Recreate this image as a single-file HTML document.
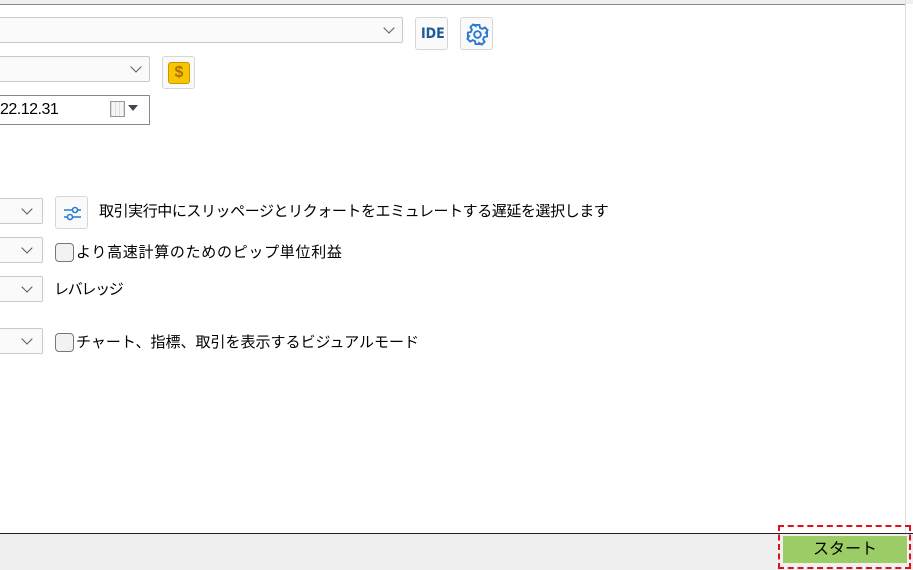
<!DOCTYPE html>
<html><head><meta charset="utf-8"><style>
*{box-sizing:border-box;margin:0;padding:0}
body{width:913px;height:570px;background:#fff;position:relative;overflow:hidden;font-family:"Liberation Sans","Noto Sans CJK JP",sans-serif;font-size:15px;color:#000}
.a{position:absolute}
.sel{position:absolute;border:1px solid #c9c9c9;background:#fafafa;border-radius:2px}
.chev{position:absolute;width:8px;height:8px;border-right:1px solid #555;border-bottom:1px solid #555;transform:rotate(45deg)}
.btn{position:absolute;border:1px solid #d6d6d6;border-radius:3px;background:#fafafa}
.cb{position:absolute;width:19px;height:19px;border:1px solid #777;border-radius:4px;background:#f2f2f2}
.t{position:absolute;white-space:nowrap;font-size:15px;line-height:20px}
</style></head><body>
<div class="a" style="left:0;top:0;width:913px;height:4px;background:#f0f0f0"></div>
<div class="a" style="left:0;top:4px;width:905px;height:1px;background:#888"></div>
<div class="a" style="left:905px;top:0;width:1px;height:533px;background:#e0e0e0"></div>

<div class="sel" style="left:-2px;top:17px;width:405px;height:26px"><div class="chev" style="left:386px;top:6px"></div></div>
<div class="btn" style="left:415px;top:17px;width:33px;height:33px"><div class="t" style="left:5px;top:6px;font-size:14px;font-weight:bold;color:#1e5a96;font-family:'DejaVu Sans Condensed','DejaVu Sans',sans-serif">IDE</div></div>
<div class="btn" style="left:460px;top:17px;width:33px;height:33px">
<svg class="a" style="left:5px;top:5px" width="23" height="23" viewBox="0 0 24 24" fill="none" stroke="#2a7bd0" stroke-width="2"><circle cx="12" cy="12" r="3.5"/><path d="M10 2h4l.6 3 2.4 1.2 2.7-1.6 2.8 2.8-1.6 2.7L22 10v4l-3 .6-1.2 2.4 1.6 2.7-2.8 2.8-2.7-1.6L14 22h-4l-.6-3-2.4-1.2-2.7 1.6-2.8-2.8 1.6-2.7L2 14v-4l3-.6 1.2-2.4-1.6-2.7 2.8-2.8 2.7 1.6z"/></svg></div>

<div class="sel" style="left:-2px;top:56px;width:152px;height:26px"><div class="chev" style="left:133px;top:6px"></div></div>
<div class="btn" style="left:162px;top:56px;width:33px;height:33px"><div class="a" style="left:5px;top:5px;width:22px;height:22px;background:#f7c600;border:1px solid #c99700;border-radius:3px;color:#b07000;font-weight:bold;font-size:16px;text-align:center;line-height:20px">$</div></div>

<div class="a" style="left:-2px;top:95px;width:152px;height:30px;border:1px solid #888;background:#fff"></div>
<div class="t" style="left:0;top:100px;font-size:16px;letter-spacing:-0.5px">22.12.31</div>
<div class="a" style="left:110px;top:101px;width:15px;height:16px;border:1px solid #999;background:repeating-linear-gradient(90deg,#ddd 0 1px,#f6f6f6 1px 4px)"></div>
<div class="a" style="left:128px;top:105px;border-left:5px solid transparent;border-right:5px solid transparent;border-top:6px solid #445"></div>

<div class="sel" style="left:-2px;top:198px;width:45px;height:26px"><div class="chev" style="left:24px;top:6px"></div></div>
<div class="btn" style="left:55px;top:196px;width:33px;height:33px">
<svg class="a" style="left:6px;top:6px" width="21" height="21" viewBox="0 0 21 21" fill="none" stroke="#2a7bd0" stroke-width="1.6"><path d="M2 7h17M2 14h17"/><circle cx="13" cy="7" r="2.5" fill="#fff"/><circle cx="8" cy="14" r="2.5" fill="#fff"/></svg></div>
<div class="t" style="left:99px;top:202px;letter-spacing:-0.43px">取引実行中にスリッページとリクォートをエミュレートする遅延を選択します</div>

<div class="sel" style="left:-2px;top:237px;width:45px;height:26px"><div class="chev" style="left:24px;top:6px"></div></div>
<div class="cb" style="left:55px;top:243px"></div>
<div class="t" style="left:76px;top:243px;letter-spacing:0.7px">より高速計算のためのピップ単位利益</div>

<div class="sel" style="left:-2px;top:276px;width:45px;height:26px"><div class="chev" style="left:24px;top:6px"></div></div>
<div class="t" style="left:54px;top:280px;letter-spacing:-1.3px">レバレッジ</div>

<div class="sel" style="left:-2px;top:328px;width:45px;height:26px"><div class="chev" style="left:24px;top:6px"></div></div>
<div class="cb" style="left:55px;top:333px"></div>
<div class="t" style="left:76px;top:333px">チャート、指標、取引を表示するビジュアルモード</div>

<div class="a" style="left:0;top:533px;width:913px;height:1px;background:#222"></div>
<div class="a" style="left:0;top:534px;width:913px;height:36px;background:#f0f0f0"></div>
<div class="a" style="left:778px;top:525px;width:133px;height:44px;border:2px dashed #e0101a"></div>
<div class="a" style="left:783px;top:536px;width:124px;height:27px;background:#9ccc65;text-align:center;line-height:27px;font-size:16px">スタート</div>
</body></html>
